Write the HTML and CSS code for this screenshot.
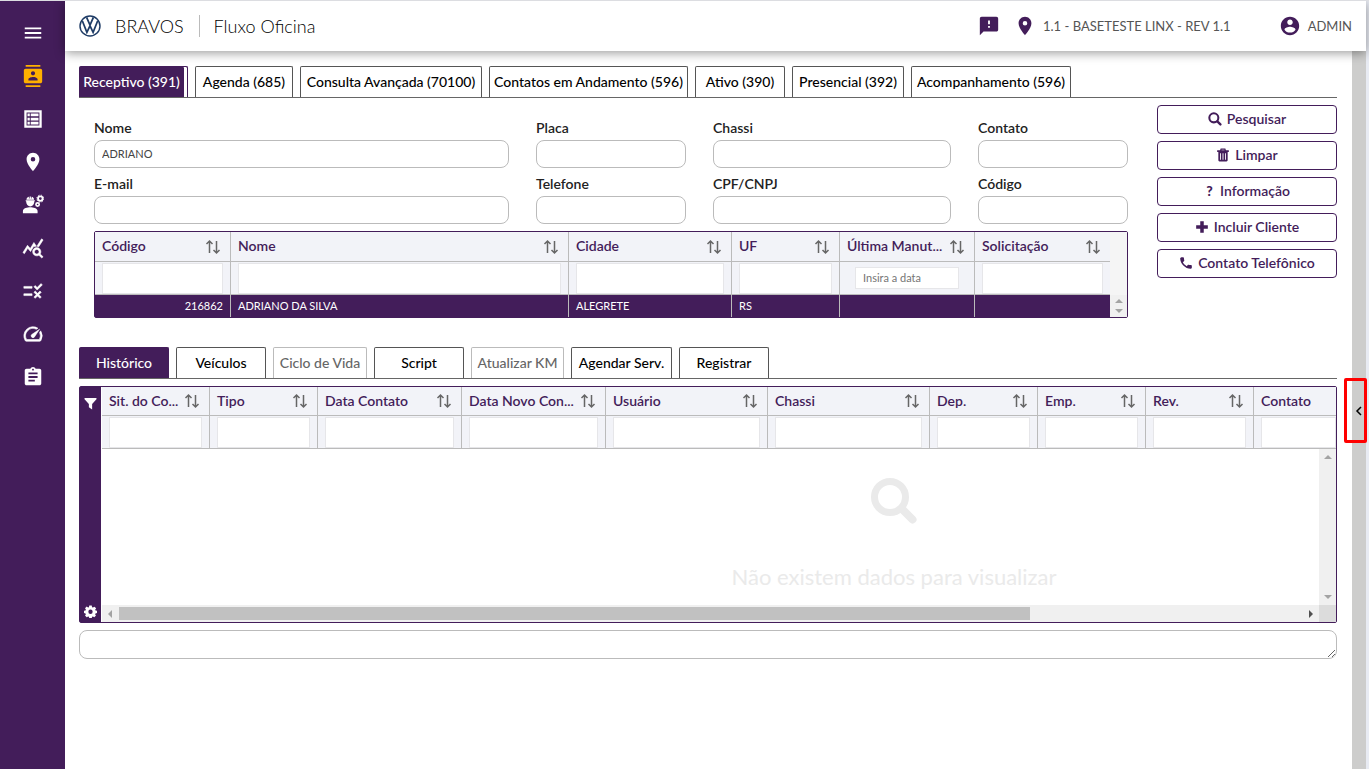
FILE: index.html
```html
<!DOCTYPE html>
<html lang="pt-BR">
<head>
    <meta charset="UTF-8">
    <meta name="viewport" content="width=device-width, initial-scale=1.0">
    <title>Fluxo Oficina</title>
    <link rel="stylesheet" href="styles.css">
</head>
<body>
    <svg class="sprite" aria-hidden="true">
        <symbol id="sort" viewBox="0 0 16 16">
            <path d="M4.500 14V2M1.500 5l3-3 3 3M11.500 2v12M8.500 11l3 3 3-3" fill="none" stroke="currentColor" stroke-width="1.500"/>
        </symbol>
        <symbol id="pin" viewBox="0 0 24 24">
            <path d="M12 2C8.130 2 5 5.130 5 9c0 5.250 7 13 7 13s7-7.750 7-13c0-3.870-3.130-7-7-7zm0 9.500a2.500 2.500 0 1 1 0-5 2.500 2.500 0 0 1 0 5z"/>
        </symbol>
        <symbol id="search" viewBox="0 0 48 48">
            <circle cx="20" cy="20" r="15.500" fill="none" stroke="currentColor" stroke-width="7"/>
            <path d="M32 32l10.500 10.500" stroke="currentColor" stroke-width="8" stroke-linecap="round"/>
        </symbol>
    </svg>

    <nav class="sidebar">
        <button class="nav-item" aria-label="Menu"><svg viewBox="0 0 24 24"><path d="M3 18h18v-2H3v2zm0-5h18v-2H3v2zm0-7v2h18V6H3z"/></svg></button>
        <a class="nav-item active" href="#" aria-label="Contatos"><svg viewBox="0 0 24 24"><path d="M20 0H4v2h16V0zM4 24h16v-2H4v2zM20 4H4c-1.100 0-2 .9-2 2v12c0 1.100.9 2 2 2h16c1.100 0 2-.9 2-2V6c0-1.100-.9-2-2-2zm-8 2.750c1.240 0 2.250 1.010 2.250 2.250s-1.010 2.250-2.250 2.250S9.750 10.240 9.750 9 10.760 6.750 12 6.750zM17 17H7v-1.500c0-1.670 3.330-2.500 5-2.500s5 .83 5 2.500V17z"/></svg></a>
        <a class="nav-item" href="#" aria-label="Lista"><svg viewBox="0 0 24 24"><path fill-rule="evenodd" d="M2.500 2.500h19v19h-19zM5 5v14h14V5zM6 6h2.500v3H6zM9.500 6H18v3H9.500zM6 10.500h2.500v3H6zM9.500 10.500H18v3H9.500zM6 15h2.500v3H6zM9.500 15H18v3H9.500z"/></svg></a>
        <a class="nav-item" href="#" aria-label="Local"><svg><use href="#pin"/></svg></a>
        <a class="nav-item" href="#" aria-label="Oficina"><svg viewBox="0 0 24 24"><path d="M1 21v-2.500C1 15.500 6 14.500 9 14.500s8 1 8 4V21zM4.500 8h9a4.500 5.500 0 0 1-9 0zM4 6.700h10v1.300H4zM4.800 6.200C5 4.500 6.200 3.300 7.500 3v2h.8V2.600h1.400V5h.8V3c1.500.3 2.500 1.500 2.700 3.200z"/><circle cx="20" cy="5" r="2.500" fill="none" stroke="currentColor" stroke-width="2"/><circle cx="20" cy="5" r="3.800" fill="none" stroke="currentColor" stroke-width="1" stroke-dasharray="1.500 1.500"/><circle cx="17" cy="11.500" r="1.800" fill="none" stroke="currentColor" stroke-width="1.800"/></svg></a>
        <a class="nav-item" href="#" aria-label="Estatísticas"><svg viewBox="0 0 24 24"><path stroke="currentColor" stroke-width=".6" d="M19.880 18.470c.44-.7.7-1.510.7-2.390 0-2.490-2.010-4.500-4.500-4.500s-4.500 2.010-4.500 4.500 2.010 4.500 4.490 4.500c.88 0 1.700-.26 2.390-.7L21.580 23 23 21.580l-3.120-3.110zm-3.800.11c-1.380 0-2.500-1.120-2.500-2.500s1.120-2.500 2.500-2.500 2.500 1.120 2.500 2.500-1.120 2.500-2.500 2.500zm-.36-8.500c-.74.02-1.450.18-2.100.45l-.55-.83-3.800 6.180-3.010-3.520-3.630 5.810L1 17l5-8 3 3.500L13 6l2.720 4.080zm2.590.5c-.64-.28-1.330-.45-2.050-.49L21.380 2 23 3.180l-4.690 7.400z"/></svg></a>
        <a class="nav-item" href="#" aria-label="Regras"><svg viewBox="0 0 24 24"><path stroke="currentColor" stroke-width=".6" d="M16.540 11L13 7.460l1.410-1.410 2.120 2.120 4.240-4.240 1.410 1.410L16.540 11zM11 7H2v2h9V7zm10 6.410L19.590 12 17 14.590 14.410 12 13 13.410 15.590 16 13 18.590 14.410 20 17 17.410 19.590 20 21 18.590 18.410 16 21 13.410zM11 15H2v2h9v-2z"/></svg></a>
        <a class="nav-item" href="#" aria-label="Painel"><svg viewBox="0 0 24 24"><path stroke="currentColor" stroke-width=".6" d="M20.380 8.570l-1.230 1.850a8 8 0 0 1-.22 7.580H5.070A8 8 0 0 1 15.580 6.850l1.850-1.230A10 10 0 0 0 3.350 19a2 2 0 0 0 1.720 1h13.850a2 2 0 0 0 1.740-1 10 10 0 0 0-.27-10.440zm-9.790 6.840a2 2 0 0 0 2.830 0l5.660-8.490-8.490 5.660a2 2 0 0 0 0 2.830z"/></svg></a>
        <a class="nav-item" href="#" aria-label="Tarefas"><svg viewBox="0 0 24 24"><path d="M19 3h-4.180C14.400 1.840 13.300 1 12 1c-1.300 0-2.400.84-2.820 2H5c-1.100 0-2 .9-2 2v14c0 1.100.9 2 2 2h14c1.100 0 2-.9 2-2V5c0-1.100-.9-2-2-2zm-7 0c.55 0 1 .45 1 1s-.45 1-1 1-1-.45-1-1 .45-1 1-1zm2 14H7v-2h7v2zm3-4H7v-2h10v2zm0-4H7V7h10v2z"/></svg></a>
    </nav>

    <div class="page">
        <header class="header">
            <svg class="logo" viewBox="0 0 24 24" stroke="#1f3c66" aria-hidden="true">
                <circle cx="12" cy="12" r="10.900" stroke-width="1.600"/>
                <path d="M8.300 2.500L12 11l3.700-8.500M3.700 6.500L8.600 19l3.400-7.200L15.400 19l4.900-12.500" stroke-width="1.900"/>
            </svg>
            <h1 class="brand">BRAVOS</h1>
            <span class="page-name">Fluxo Oficina</span>
            <div class="user-bar">
                <button class="icon-btn" aria-label="Avisos"><svg viewBox="0 0 24 24"><path fill-rule="evenodd" d="M20 2H4c-1.100 0-2 .9-2 2v18l4-4h14c1.100 0 2-.9 2-2V4c0-1.100-.9-2-2-2zm-7 12h-2v-2h2v2zm0-4h-2V6h2v4z"/></svg></button>
                <svg><use href="#pin"/></svg>
                <span class="branch">1.1 - BASETESTE LINX - REV 1.1</span>
                <svg viewBox="0 0 24 24"><path d="M12 2C6.480 2 2 6.480 2 12s4.480 10 10 10 10-4.480 10-10S17.520 2 12 2zm0 3c1.660 0 3 1.340 3 3s-1.340 3-3 3-3-1.340-3-3 1.340-3 3-3zm0 14.200c-2.500 0-4.710-1.280-6-3.220.03-1.990 4-3.080 6-3.080 1.990 0 5.970 1.090 6 3.080-1.290 1.940-3.500 3.220-6 3.220z"/></svg>
                <span>ADMIN</span>
            </div>
        </header>

        <div class="body">
            <main class="content">
                <div class="tabs tabs-main">
                    <button class="tab selected">Receptivo (391)</button>
                    <button class="tab">Agenda (685)</button>
                    <button class="tab">Consulta Avançada (70100)</button>
                    <button class="tab">Contatos em Andamento (596)</button>
                    <button class="tab">Ativo (390)</button>
                    <button class="tab">Presencial (392)</button>
                    <button class="tab">Acompanhamento (596)</button>
                </div>

                <div class="search-area">
                    <div class="search-left">
                        <form class="fields">
                            <div class="field"><label for="nome">Nome</label><input type="text" id="nome" value="ADRIANO"></div>
                            <div class="field"><label for="placa">Placa</label><input type="text" id="placa"></div>
                            <div class="field"><label for="chassi">Chassi</label><input type="text" id="chassi"></div>
                            <div class="field"><label for="contato">Contato</label><input type="text" id="contato"></div>
                            <div class="field"><label for="email">E-mail</label><input type="text" id="email"></div>
                            <div class="field"><label for="telefone">Telefone</label><input type="text" id="telefone"></div>
                            <div class="field"><label for="cpf">CPF/CNPJ</label><input type="text" id="cpf"></div>
                            <div class="field"><label for="codigo">Código</label><input type="text" id="codigo"></div>
                        </form>

                        <div class="grid-box clients">
                            <table class="grid">
                                <colgroup>
                                    <col class="w136"><col><col class="w163"><col class="w108"><col class="w135"><col class="w135">
                                </colgroup>
                                <thead>
                                    <tr>
                                        <th><div class="th"><span>Código</span><svg><use href="#sort"/></svg></div></th>
                                        <th><div class="th"><span>Nome</span><svg><use href="#sort"/></svg></div></th>
                                        <th><div class="th"><span>Cidade</span><svg><use href="#sort"/></svg></div></th>
                                        <th><div class="th"><span>UF</span><svg><use href="#sort"/></svg></div></th>
                                        <th><div class="th"><span>Última Manut...</span><svg><use href="#sort"/></svg></div></th>
                                        <th><div class="th"><span>Solicitação</span><svg><use href="#sort"/></svg></div></th>
                                    </tr>
                                    <tr class="filters">
                                        <td><input type="text" aria-label="Filtrar Código"></td>
                                        <td><input type="text" aria-label="Filtrar Nome"></td>
                                        <td><input type="text" aria-label="Filtrar Cidade"></td>
                                        <td><input type="text" aria-label="Filtrar UF"></td>
                                        <td class="date"><input type="text" placeholder="Insira a data" aria-label="Filtrar Última Manutenção"></td>
                                        <td><input type="text" aria-label="Filtrar Solicitação"></td>
                                    </tr>
                                </thead>
                                <tbody>
                                    <tr>
                                        <td class="num">216862</td>
                                        <td>ADRIANO DA SILVA</td>
                                        <td>ALEGRETE</td>
                                        <td>RS</td>
                                        <td></td>
                                        <td></td>
                                    </tr>
                                </tbody>
                            </table>
                            <div class="gutter">
                                <div class="vscroll"><i class="arrow up"></i><i class="arrow down"></i></div>
                            </div>
                        </div>
                    </div>

                    <div class="actions">
                        <button class="action"><svg><use href="#search"/></svg>Pesquisar</button>
                        <button class="action"><svg viewBox="0 0 24 24"><path fill-rule="evenodd" d="M8 1h8l1 3h5v3h-2v14q0 2-2 2H6q-2 0-2-2V7H2V4h5zM9.500 3v1h5V3zM7 9v11h1.500V9zM11.200 9v11h1.600V9zM15.500 9v11H17V9z"/></svg>Limpar</button>
                        <button class="action"><b class="mark">?</b>Informação</button>
                        <button class="action"><svg viewBox="0 0 24 24"><path d="M9 2h6v7h7v6h-7v7H9v-7H2V9h7z"/></svg>Incluir Cliente</button>
                        <button class="action"><svg viewBox="0 0 24 24"><path d="M6.620 10.790c1.440 2.830 3.760 5.140 6.590 6.590l2.200-2.200c.27-.27.67-.36 1.020-.24 1.120.37 2.330.57 3.570.57.55 0 2 .45 2 1V20c0 .55-1.450 2-2 2C10.610 22 2 13.390 2 4c0-.55 1.450-2 2-2h3.500c.55 0 1 1.450 1 2 0 1.250.2 2.450.57 3.570.11.35.03.74-.25 1.020l-2.200 2.200z"/></svg>Contato Telefônico</button>
                    </div>
                </div>

                <div class="tabs tabs-detail">
                    <button class="tab selected">Histórico</button>
                    <button class="tab">Veículos</button>
                    <button class="tab" disabled>Ciclo de Vida</button>
                    <button class="tab">Script</button>
                    <button class="tab" disabled>Atualizar KM</button>
                    <button class="tab">Agendar Serv.</button>
                    <button class="tab">Registrar</button>
                </div>

                <div class="grid-box history">
                    <div class="tools">
                        <button aria-label="Filtrar"><svg viewBox="0 0 24 24"><path d="M1 2h22v2l-8 9v10l-6-4v-6L1 4z"/></svg></button>
                        <button aria-label="Configurar"><svg viewBox="0 0 24 24"><path fill-rule="evenodd" d="M9.700 1h4.600l.6 3 1.700.7L19.200 3l3.200 3-1.800 2.600.7 1.500 2.700.6v4.200l-2.800.6-.7 1.600 1.600 2.500-3.100 3.100-2.500-1.600-1.600.7-.6 2.800H9.700l-.6-2.800-1.600-.7L5 22.700l-3.100-3.100 1.600-2.500-.7-1.600-2.800-.6v-4.200l2.800-.6.7-1.600L1.900 6 5 2.900l2.500 1.700L9.100 4zM12 8.500a4 4 0 1 0 0 8 4 4 0 0 0 0-8z"/></svg></button>
                    </div>
                    <div class="history-main">
                        <div class="head-view">
                            <table class="grid">
                                <colgroup>
                                    <col class="w108"><col class="w108"><col class="w144"><col class="w144"><col class="w162"><col class="w162"><col class="w108"><col class="w108"><col class="w108"><col>
                                </colgroup>
                                <thead>
                                    <tr>
                                        <th><div class="th"><span>Sit. do Co...</span><svg><use href="#sort"/></svg></div></th>
                                        <th><div class="th"><span>Tipo</span><svg><use href="#sort"/></svg></div></th>
                                        <th><div class="th"><span>Data Contato</span><svg><use href="#sort"/></svg></div></th>
                                        <th><div class="th"><span>Data Novo Con...</span><svg><use href="#sort"/></svg></div></th>
                                        <th><div class="th"><span>Usuário</span><svg><use href="#sort"/></svg></div></th>
                                        <th><div class="th"><span>Chassi</span><svg><use href="#sort"/></svg></div></th>
                                        <th><div class="th"><span>Dep.</span><svg><use href="#sort"/></svg></div></th>
                                        <th><div class="th"><span>Emp.</span><svg><use href="#sort"/></svg></div></th>
                                        <th><div class="th"><span>Rev.</span><svg><use href="#sort"/></svg></div></th>
                                        <th><div class="th"><span>Contato</span></div></th>
                                    </tr>
                                    <tr class="filters">
                                        <td><input type="text" aria-label="Filtrar Situação"></td>
                                        <td><input type="text" aria-label="Filtrar Tipo"></td>
                                        <td><input type="text" aria-label="Filtrar Data Contato"></td>
                                        <td><input type="text" aria-label="Filtrar Data Novo Contato"></td>
                                        <td><input type="text" aria-label="Filtrar Usuário"></td>
                                        <td><input type="text" aria-label="Filtrar Chassi"></td>
                                        <td><input type="text" aria-label="Filtrar Departamento"></td>
                                        <td><input type="text" aria-label="Filtrar Empresa"></td>
                                        <td><input type="text" aria-label="Filtrar Revisão"></td>
                                        <td><input type="text" aria-label="Filtrar Contato"></td>
                                    </tr>
                                </thead>
                            </table>
                        </div>
                        <div class="data-view">
                            <div class="viewport">
                                <div class="empty">
                                    <svg><use href="#search"/></svg>
                                    <p>Não existem dados para visualizar</p>
                                </div>
                            </div>
                            <div class="vscroll"><i class="arrow up"></i><i class="arrow down"></i></div>
                        </div>
                        <div class="hscroll">
                            <i class="arrow left"></i>
                            <div class="track"><div class="thumb"></div></div>
                            <i class="arrow right"></i>
                            <div class="corner"></div>
                        </div>
                    </div>
                </div>

                <textarea class="notes" rows="1" aria-label="Observações"></textarea>
            </main>

            <aside class="drawer">
                <button class="drawer-toggle" aria-label="Abrir painel"><svg viewBox="0 0 8 10"><path d="M6 1L2 5l4 4" fill="none" stroke="currentColor" stroke-width="1.500"/></svg></button>
            </aside>
        </div>
    </div>
</body>
</html>
```
FILE: styles.css
```css
* {
    box-sizing: border-box;
}
body {
    display: flex;
    min-height: 100vh;
    margin: 0;
    padding-right: 3px;
    border-top: 1px solid #dcdde1;
    background: #e8ebf3;
    color: #222;
    font-family: Lato, "Open Sans", sans-serif;
    font-size: 14px;
}
button, input, textarea {
    font-family: inherit;
    font-size: 14px;
}
button {
    padding: 0;
    border: none;
    background: none;
    color: inherit;
    cursor: pointer;
}
svg {
    display: block;
    flex: none;
    fill: currentColor;
}
.sprite {
    position: absolute;
    width: 0;
    height: 0;
}

/* sidebar */
.sidebar {
    display: flex;
    flex-direction: column;
    flex: none;
    align-items: center;
    gap: 21px;
    width: 65px;
    padding-top: 21px;
    background: #431d5a;
}
.nav-item {
    color: #fff;
}
.nav-item.active {
    color: #ffb000;
}
.nav-item svg {
    width: 22px;
    height: 22px;
}
.page {
    display: flex;
    flex: 1;
    flex-direction: column;
    min-width: 0;
    background: #fff;
}

/* header */
.header {
    display: flex;
    align-items: center;
    height: 50px;
    padding: 0 14px;
    background: #fff;
    box-shadow: 0 2px 10px rgba(0, 0, 0, 0.4);
    z-index: 1;
}
.logo {
    width: 22px;
    height: 22px;
    fill: none;
}
.brand, .page-name {
    margin: 0;
    color: #000;
    font-size: 18px;
    font-weight: 300;
    line-height: 22px;
}
.brand {
    margin-left: 14px;
    padding-right: 15px;
    border-right: 1px solid #bbb;
}
.page-name {
    margin-left: 14px;
}
.user-bar {
    display: flex;
    align-items: center;
    margin-left: auto;
    color: #555;
    font-size: 13px;
}
.user-bar svg {
    width: 22px;
    height: 22px;
    margin-right: 7px;
    color: #431d5a;
}
.icon-btn svg {
    margin-right: 14px;
}
.branch {
    margin-right: 48px;
}
.body {
    display: flex;
    flex: 1;
}
.content {
    flex: 1;
    min-width: 0;
    padding: 15px 15px 0 14px;
}

/* tabs */
.tabs {
    display: grid;
    gap: 7px;
    height: 32px;
    border-bottom: 1px solid #666;
}
.tabs-main {
    grid-template-columns: 109px 98px 182px 199px 90px 112px 160px;
}
.tabs-detail {
    grid-template-columns: 90px 90px 94px 90px 93px 101px 90px;
    margin-top: 29px;
}
.tab {
    padding-bottom: 2px;
    border: 1px solid #555;
    border-bottom: none;
    border-radius: 2px 2px 0 0;
    color: #000;
    font-weight: 500;
    white-space: nowrap;
}
.tab.selected {
    border-color: #431d5a;
    background: #431d5a;
    color: #fff;
}
.tabs-main .selected {
    padding-right: 4px;
    box-shadow: inset -3px 0 #fff;
}
.tab:disabled {
    border-color: #bbb;
    color: #666;
}

/* search */
.search-area {
    display: flex;
    gap: 29px;
    padding-top: 7px;
}
.search-left {
    flex: 1;
    min-width: 0;
    padding: 14px 0 0 15px;
}
.fields {
    display: grid;
    grid-template-columns: 415fr 150fr 238fr 150fr;
    gap: 7px 27px;
}
.field {
    display: flex;
    flex-direction: column;
    gap: 3px;
    min-width: 0;
}
.field label {
    font-weight: 600;
    line-height: 18px;
}
.field input {
    width: 100%;
    height: 28px;
    padding: 0 7px 2px;
    border: 1px solid #bbb;
    border-radius: 8px;
    color: #444;
    font-size: 11px;
}
.actions {
    display: flex;
    flex-direction: column;
    gap: 7px;
    width: 180px;
}
.action {
    display: flex;
    align-items: center;
    justify-content: center;
    gap: 5px;
    height: 29px;
    padding-bottom: 2px;
    border: 1px solid #431d5a;
    border-radius: 4px;
    background: #fff;
    color: #431d5a;
    font-weight: 600;
}
.action svg {
    width: 14px;
    height: 14px;
}
.mark {
    width: 11px;
    font-weight: 900;
}

/* grids */
.grid-box {
    display: flex;
    border: 1px solid #431d5a;
    border-radius: 2px;
}
.clients {
    margin-top: 7px;
}
.grid {
    flex: 1;
    min-width: 0;
    width: 100%;
    border-collapse: separate;
    border-spacing: 0;
    table-layout: fixed;
}
.w108 { width: 108px; }
.w135 { width: 135px; }
.w136 { width: 136px; }
.w144 { width: 144px; }
.w162 { width: 162px; }
.w163 { width: 163px; }
.grid th, .grid td {
    padding: 0 7px;
    border-right: 1px solid #bbb;
}
.grid th:last-child, .grid td:last-child {
    border-right: none;
}
.grid th, .filters td {
    border-bottom: 1px solid #bbb;
    background: #f2f3f8;
}
.grid th {
    height: 30px;
    color: #431d5a;
    font-weight: 600;
    text-align: left;
}
.history th {
    height: 29px;
}
.history .filters td:last-child {
    padding-right: 0;
}
.th {
    display: flex;
    align-items: center;
    justify-content: space-between;
    padding-right: 2px;
}
.th span {
    padding-bottom: 2px;
    white-space: nowrap;
}
.th svg {
    width: 16px;
    height: 16px;
    color: #666;
}
.filters td {
    height: 33px;
}
.filters input {
    display: block;
    width: 100%;
    height: 31px;
    padding: 0 7px 2px;
    border: 1px solid #e6e6e9;
    background: #fff;
    font-size: 11px;
}
.filters .date {
    padding: 0 15px;
}
.date input {
    height: 22px;
}
.grid tbody td {
    height: 22px;
    padding-bottom: 1px;
    background: #431d5a;
    color: #fff;
    font-size: 11px;
}
.grid .num {
    text-align: right;
}
.gutter {
    display: flex;
    flex: none;
    flex-direction: column;
    justify-content: flex-end;
    background: #f5f5f5;
}
.vscroll {
    display: flex;
    flex: none;
    flex-direction: column;
    align-items: center;
    justify-content: space-between;
    width: 17px;
    padding: 6px 0;
    background: #f0f0f0;
}
.gutter .vscroll {
    height: 22px;
    padding: 4px 0;
}
.arrow {
    border: 4px solid transparent;
    color: #a3a3a3;
}
.up {
    border-top: none;
    border-bottom-color: currentColor;
}
.down {
    border-bottom: none;
    border-top-color: currentColor;
}
.left {
    border-left: none;
    border-right-color: currentColor;
}
.right {
    border-right: none;
    border-left-color: currentColor;
    color: #505050;
}

/* history */
.history {
    height: 237px;
    margin-top: 7px;
}
.tools {
    display: flex;
    flex: none;
    flex-direction: column;
    align-items: center;
    justify-content: space-between;
    width: 21px;
    margin-right: 1px;
    padding: 10px 0 4px;
    background: #431d5a;
    color: #fff;
}
.tools svg {
    width: 13px;
    height: 13px;
}
.history-main {
    display: flex;
    flex: 1;
    flex-direction: column;
    min-width: 0;
}
.head-view, .viewport {
    overflow: hidden;
}
.data-view {
    display: flex;
    flex: 1;
    min-height: 0;
}
.viewport {
    flex: 1;
}
.empty {
    display: flex;
    flex-direction: column;
    align-items: center;
    width: 1584px;
    padding-top: 28px;
    color: #eaeaea;
}
.empty svg {
    width: 48px;
    height: 48px;
}
.empty p {
    margin: 38px 0 0;
    font-size: 22px;
    line-height: 28px;
}
.hscroll {
    display: flex;
    align-items: center;
    height: 17px;
    padding-left: 6px;
    background: #f0f0f0;
}
.track {
    flex: 1;
    margin: 0 7px;
}
.thumb {
    width: 77%;
    height: 13px;
    background: #c1c1c1;
}
.corner {
    width: 17px;
    height: 17px;
    margin-left: 6px;
    background: #dcdcdc;
}
.notes {
    display: block;
    width: 100%;
    height: 29px;
    margin-top: 7px;
    border: 1px solid #bbb;
    border-radius: 8px;
}

/* drawer */
.drawer {
    position: relative;
    width: 14px;
    background: #cdcdcc;
}
.drawer-toggle {
    position: absolute;
    top: 327px;
    left: -8px;
    display: flex;
    align-items: center;
    justify-content: flex-end;
    width: 23px;
    height: 65px;
    padding-right: 1px;
    border: 3px solid #f00;
    border-radius: 2px;
    color: #000;
}
.drawer-toggle svg {
    width: 8px;
    height: 10px;
}
```
